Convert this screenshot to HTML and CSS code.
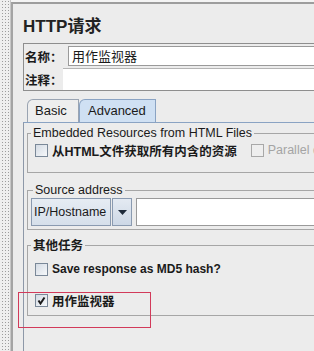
FILE: index.html
```html
<!DOCTYPE html>
<html lang="zh">
<head>
    <meta charset="UTF-8">
    <title>HTTP请求</title>
    <link rel="stylesheet" href="styles.css">
</head>
<body>
    <div class="splitter"></div>
    <div class="main">
        <div class="title">HTTP请求</div>

        <div class="info">
            <div class="row name-row">
                <span class="lbl">名称：</span>
                <div class="field">用作监视器</div>
            </div>
            <div class="row comment-row">
                <span class="lbl">注释：</span>
                <div class="field"></div>
            </div>
        </div>

        <div class="tabs">
            <div class="tab">Basic</div>
            <div class="tab active">Advanced</div>
        </div>

        <div class="pane">
            <fieldset class="group embedded">
                <legend>Embedded Resources from HTML Files</legend>
                <div class="line">
                    <label class="check bold"><span class="box"></span>从HTML文件获取所有内含的资源</label>
                    <label class="check disabled"><span class="box"></span>Parallel downloads. Number:</label>
                </div>
            </fieldset>

            <fieldset class="group source">
                <legend>Source address</legend>
                <div class="combo">
                    <div class="combo-value">IP/Hostname</div>
                    <div class="combo-arrow">
                        <svg width="9" height="5" viewBox="0 0 9 5"><path d="M0 0h9L4.5 5z" fill="#1e2a3a"/></svg>
                    </div>
                    <div class="combo-input"></div>
                </div>
            </fieldset>

            <fieldset class="group tasks">
                <legend>其他任务</legend>
                <label class="check md5"><span class="box"></span>Save response as MD5 hash?</label>
                <label class="check monitor bold">
                    <span class="box checked">
                        <svg width="9" height="9" viewBox="0 0 9 9"><path d="M1.5 4.5L3.5 7.5L7.5 1.5" fill="none" stroke="#1b1b1b" stroke-width="2"/></svg>
                    </span>用作监视器
                </label>
            </fieldset>
        </div>
    </div>

    <div class="highlight"></div>
</body>
</html>
```

FILE: styles.css
```css
html, body {
    margin: 0;
    padding: 0;
}
body {
    width: 314px;
    height: 351px;
    overflow: hidden;
    display: flex;
    background: #f4f4f4;
    font-family: "Liberation Sans", Arial, "Noto Sans CJK SC", sans-serif;
    font-size: 12.5px;
    color: #1a1a1a;
    position: relative;
}
.splitter {
    width: 10px;
    flex: none;
    background-color: #eeeeee;
    background-image: radial-gradient(circle, #9c9c9c 0.8px, transparent 1px);
    background-size: 3px 3px;
    background-position: 1px 0;
    border-right: 1px solid #c8c8c8;
}
.main {
    flex: none;
    width: 500px;
    margin-top: 2px;
    border-top: 2px solid #9d9d9d;
    border-left: 2px solid #a4a4a4;
    background: #ececec;
    padding-left: 10px;
}
.title {
    padding-top: 13px;
    height: 20px;
    line-height: 20px;
    margin-bottom: 6px;
    font-size: 17px;
    font-weight: bold;
    color: #222;
}
.info {
    border: 1px solid #8e8e8e;
    padding-top: 2px;
}
.row {
    display: flex;
    align-items: center;
}
.lbl {
    flex: none;
    white-space: nowrap;
    font-weight: bold;
    font-family: "Noto Sans CJK SC", sans-serif;
    font-size: 12.5px;
    padding-left: 1px;
}
.name-row {
    height: 20px;
    margin-bottom: 2px;
}
.name-row .lbl {
    width: 43px;
}
.comment-row {
    height: 22px;
}
.comment-row .lbl {
    width: 38px;
}
.field {
    flex: 1;
    align-self: stretch;
    background: #fff;
    box-sizing: border-box;
    font-family: "Noto Sans CJK SC", sans-serif;
    font-size: 13px;
    line-height: 18px;
    padding-left: 3px;
}
.name-row .field {
    border: 1px solid #9a9a9a;
    border-right: none;
}
.comment-row .field {
    border-top: 1px solid #b4b4b4;
}
.tabs {
    display: flex;
    margin-top: 8px;
    padding-left: 4px;
    height: 23px;
}
.tab {
    box-sizing: border-box;
    height: 23px;
    line-height: 22px;
    border: 1px solid #9aa4b2;
    border-bottom: none;
    border-top-left-radius: 6px;
    background: #eeeeee;
    color: #1a1a1a;
    font-size: 13px;
}
.tab:first-child {
    width: 52px;
    padding-left: 7px;
}
.tab.active {
    width: 77px;
    padding-left: 8px;
    background: #cfe0f3;
    border-color: #8aa3c3;
}
.pane {
    border-top: 1px solid #8aa3c3;
    border-left: 1px solid #8d98a8;
    padding-left: 3px;
    height: 240px;
}
.group {
    margin: 0;
    padding: 0;
    border: 1px solid #a6a6a6;
    border-right: none;
    min-width: 0;
}
.group legend {
    padding: 0 2px;
    line-height: 16px;
    color: #1a1a1a;
}
.embedded {
    margin-top: 2px;
    padding: 0 0 13px 7px;
}
.embedded legend,
.tasks legend {
    margin-left: -4px;
}
.line {
    display: flex;
    align-items: center;
    height: 18px;
}
.check {
    display: flex;
    align-items: center;
    height: 18px;
    white-space: nowrap;
}
.bold {
    font-weight: bold;
    font-size: 12.5px;
    font-family: "Liberation Sans", Arial, "Noto Sans CJK SC", sans-serif;
}
.box {
    width: 13px;
    height: 13px;
    box-sizing: border-box;
    border: 1px solid #7a8898;
    background: linear-gradient(135deg, #d4dbe4, #f6f8fa);
    margin-right: 4px;
    display: flex;
    align-items: center;
    justify-content: center;
    flex: none;
}
.disabled {
    margin-left: 14px;
    color: #a4a4a4;
}
.disabled .box {
    border-color: #a8a8a8;
    background: #eeeeee;
}
.source {
    margin-top: 9px;
    padding: 0 0 3px 3px;
}
.source legend {
    margin-left: 2px;
}
.combo {
    display: flex;
    height: 28px;
}
.combo-value {
    box-sizing: border-box;
    width: 80px;
    border: 1px solid #8a9ab0;
    background: linear-gradient(#e6ecf3, #d6dfea);
    line-height: 26px;
    padding-left: 2px;
    white-space: nowrap;
    overflow: hidden;
}
.combo-arrow {
    box-sizing: border-box;
    width: 20px;
    margin-left: 1px;
    border: 1px solid #8a9ab0;
    background: linear-gradient(#e4eaf2, #cdd8e6);
    display: flex;
    align-items: center;
    justify-content: center;
}
.combo-input {
    flex: 1;
    margin-left: 4px;
    box-sizing: border-box;
    border: 1px solid #9a9a9a;
    border-right: none;
    background: #fff;
}
.tasks {
    margin-top: 7px;
    padding: 7px 0 6px 7px;
}
.tasks legend {
    font-family: "Noto Sans CJK SC", sans-serif;
    font-weight: bold;
}
.md5 {
    font-weight: bold;
    font-size: 12px;
}
.monitor {
    margin-top: 13px;
}
.highlight {
    position: absolute;
    left: 18px;
    top: 292px;
    width: 131px;
    height: 34px;
    border: 1px solid #d23a5a;
}
```
